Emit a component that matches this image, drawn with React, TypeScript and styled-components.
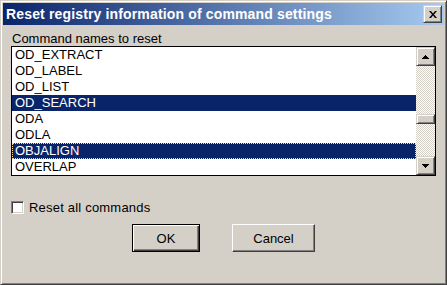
import React from "react";
import styled, { createGlobalStyle } from "styled-components";

const GlobalStyle = createGlobalStyle`
  html, body {
    margin: 0;
    padding: 0;
    background: #d4d0c8;
  }
  * {
    box-sizing: border-box;
  }
`;

const raised = `
  border: 1px solid;
  border-color: #d4d0c8 #404040 #404040 #d4d0c8;
  box-shadow: inset 1px 1px 0 #fff, inset -1px -1px 0 #808080;
`;

const Window = styled.div`
  width: 447px;
  height: 285px;
  padding: 2px;
  display: flex;
  flex-direction: column;
  background: #d4d0c8;
  font-family: "Liberation Sans", Arial, sans-serif;
  font-size: 13px;
  color: #000;
  ${raised}
`;

const TitleBar = styled.div`
  height: 22px;
  display: flex;
  align-items: center;
  justify-content: space-between;
  padding: 0 2px 0 3px;
  background: linear-gradient(to right, #0a246a, #a6caf0);
`;

const Title = styled.span`
  color: #fff;
  font-weight: bold;
  font-size: 14px;
  letter-spacing: 0.15px;
  white-space: nowrap;
`;

const CloseButton = styled.div`
  width: 19px;
  height: 18px;
  display: flex;
  align-items: center;
  justify-content: center;
  background: #d4d0c8;
  ${raised}
`;

const Body = styled.div`
  flex: 1;
  display: flex;
  flex-direction: column;
  padding: 0 8px;
`;

const FieldLabel = styled.div`
  margin: 6px 0 0 1px;
  height: 15px;
  line-height: 15px;
  white-space: nowrap;
`;

const ListBox = styled.div`
  height: 130px;
  display: flex;
  border: 1px solid #000;
  background: #fff;
`;

const Items = styled.div`
  flex: 1;
  display: flex;
  flex-direction: column;
`;

const Row = styled.div<{ $selected?: boolean; $focused?: boolean }>`
  height: 16px;
  line-height: 16px;
  padding-left: 3px;
  white-space: nowrap;
  background: ${(p) => (p.$selected ? "#0a246a" : "#fff")};
  color: ${(p) => (p.$selected ? "#fff" : "#000")};
  outline: ${(p) => (p.$focused ? "1px dotted #f5db95" : "none")};
  outline-offset: -1px;
`;

const ScrollBar = styled.div`
  width: 19px;
  display: flex;
  flex-direction: column;
`;

const ScrollButton = styled.div`
  width: 19px;
  height: 19px;
  display: flex;
  align-items: center;
  justify-content: center;
  background: #d4d0c8;
  ${raised}
`;

const Track = styled.div`
  flex: 1;
  display: flex;
  flex-direction: column;
  background: conic-gradient(#fff 0 25%, #d4d0c8 0 50%, #fff 0 75%, #d4d0c8 0) 0 0 / 2px 2px;
`;

const Thumb = styled.div<{ $offset: number }>`
  margin-top: ${(p) => p.$offset}px;
  width: 19px;
  height: 10px;
  background: #d4d0c8;
  ${raised}
`;

const CheckRow = styled.label`
  margin-top: 25px;
  display: flex;
  align-items: center;
  gap: 5px;
  height: 13px;
  line-height: 13px;
  letter-spacing: 0.2px;
`;

const CheckBox = styled.span`
  width: 13px;
  height: 13px;
  background: #fff;
  border: 1px solid;
  border-color: #808080 #fff #fff #808080;
  box-shadow: inset 1px 1px 0 #404040, inset -1px -1px 0 #d4d0c8;
`;

const ButtonRow = styled.div`
  margin-top: 10px;
  display: flex;
  justify-content: center;
  gap: 32px;
`;

const PushButton = styled.div<{ $width: number; $default?: boolean }>`
  width: ${(p) => p.$width}px;
  height: 28px;
  display: flex;
  align-items: center;
  justify-content: center;
  background: #d4d0c8;
  ${(p) =>
    p.$default
      ? `
    border: 1px solid #000;
    box-shadow: inset 1px 1px 0 #fff, inset -1px -1px 0 #404040, inset -2px -2px 0 #808080;
  `
      : `
    border: 1px solid;
    border-color: #fff #404040 #404040 #fff;
    box-shadow: inset -1px -1px 0 #808080;
  `}
`;

const commands = [
  "OD_EXTRACT",
  "OD_LABEL",
  "OD_LIST",
  "OD_SEARCH",
  "ODA",
  "ODLA",
  "OBJALIGN",
  "OVERLAP",
];
const selected = ["OD_SEARCH", "OBJALIGN"];

function Arrow({ down }: { down?: boolean }) {
  return (
    <svg width="7" height="4" viewBox="0 0 7 4">
      <path d={down ? "M0 0h7L3.5 4z" : "M3.5 0L7 4H0z"} fill="#000" shapeRendering="crispEdges" />
    </svg>
  );
}

export default function App() {
  return (
    <>
      <GlobalStyle />
      <Window>
        <TitleBar>
          <Title>Reset registry information of command settings</Title>
          <CloseButton>
            <svg width="8" height="7" viewBox="0 0 8 7">
              <path d="M0 0h2l2 2.5L6 0h2L5 3.5 8 7H6L4 4.5 2 7H0l3-3.5z" fill="#000" />
            </svg>
          </CloseButton>
        </TitleBar>
        <Body>
          <FieldLabel>Command names to reset</FieldLabel>
          <ListBox>
            <Items>
              {commands.map((c) => (
                <Row key={c} $selected={selected.includes(c)} $focused={c === "OBJALIGN"}>
                  {c}
                </Row>
              ))}
            </Items>
            <ScrollBar>
              <ScrollButton>
                <Arrow />
              </ScrollButton>
              <Track>
                <Thumb $offset={48} />
              </Track>
              <ScrollButton>
                <Arrow down />
              </ScrollButton>
            </ScrollBar>
          </ListBox>
          <CheckRow>
            <CheckBox />
            <span>Reset all commands</span>
          </CheckRow>
          <ButtonRow>
            <PushButton $width={68} $default>
              OK
            </PushButton>
            <PushButton $width={83}>Cancel</PushButton>
          </ButtonRow>
        </Body>
      </Window>
    </>
  );
}
